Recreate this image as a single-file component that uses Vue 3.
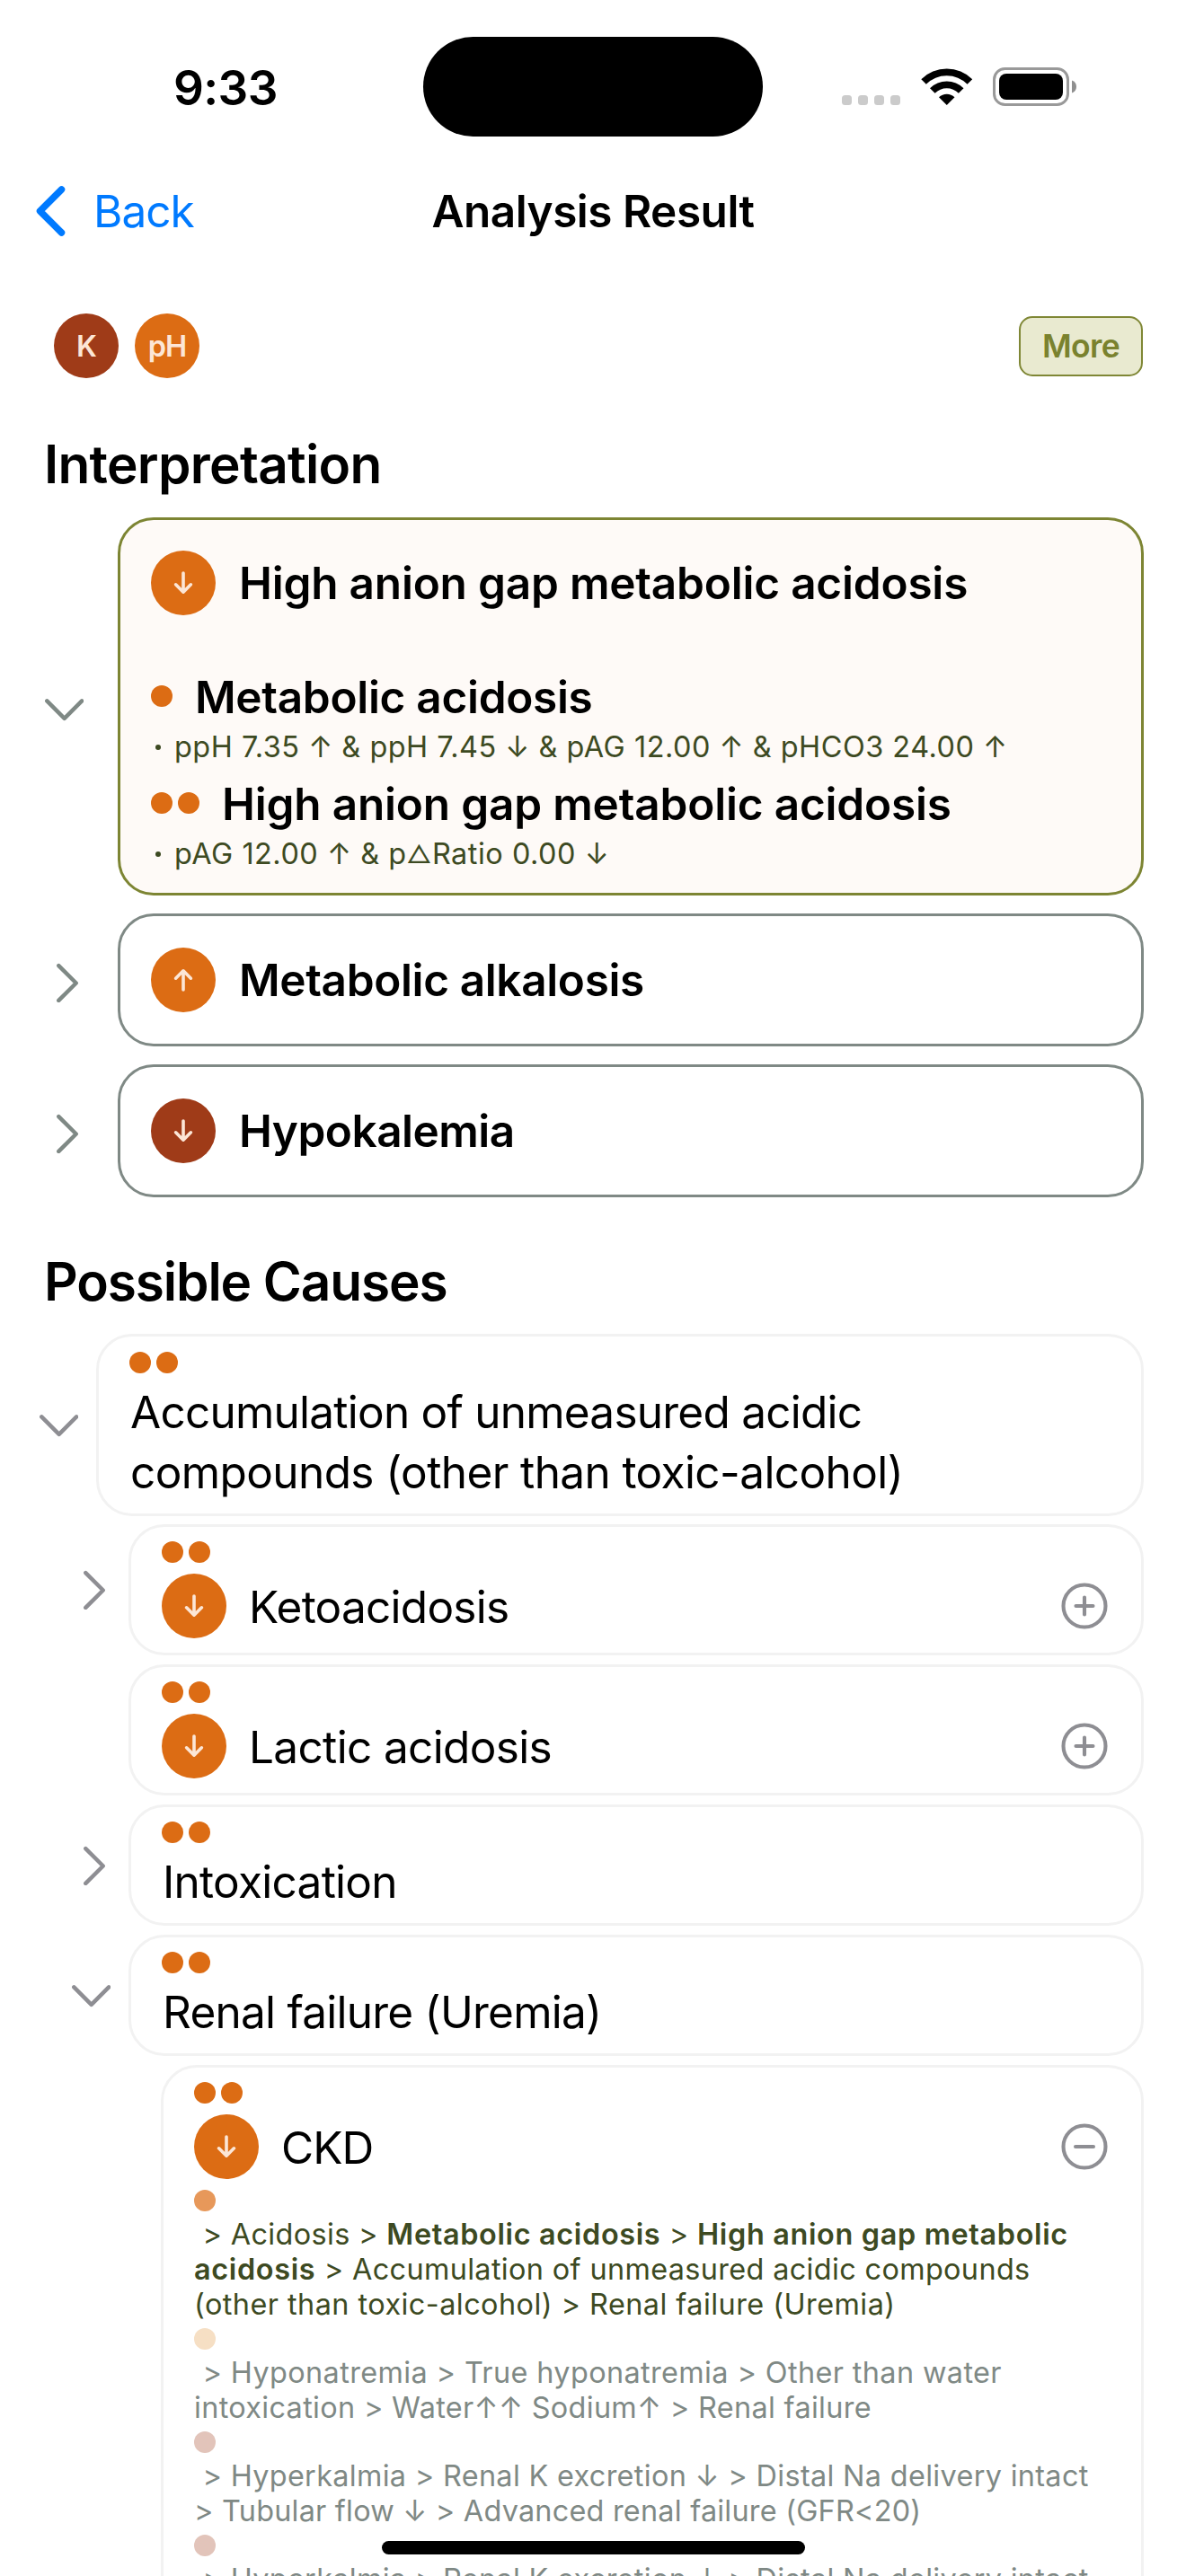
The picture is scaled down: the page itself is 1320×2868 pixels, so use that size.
<script setup>
const interpretations = [
  {
    open: true,
    tone: 'orange',
    dir: 'down',
    title: 'High anion gap metabolic acidosis',
    track: -0.2,
    details: [
      { dots: 1, title: 'Metabolic acidosis', track: -0.3, rule: ['ppH 7.35 ↑ & ppH 7.45 ↓ & pAG 12.00 ↑ & pHCO3 24.00 ↑'] },
      { dots: 2, title: 'High anion gap metabolic acidosis', track: -0.18, rule: ['pAG 12.00 ↑ & p', '△', 'Ratio 0.00 ↓'] },
    ],
  },
  { open: false, tone: 'orange', dir: 'up', title: 'Metabolic alkalosis', track: -0.36 },
  { open: false, tone: 'rust', dir: 'down', title: 'Hypokalemia', track: -0.5 },
]

const causes = [
  {
    level: 1,
    chevron: 'down',
    lines: [
      { t: 'Accumulation of unmeasured acidic', track: -0.76 },
      { t: 'compounds (other than toxic-alcohol)', track: -0.6 },
    ],
  },
  { level: 2, chevron: 'right', badge: true, action: 'plus', lines: [{ t: 'Ketoacidosis', track: -0.75 }] },
  { level: 2, badge: true, action: 'plus', lines: [{ t: 'Lactic acidosis', track: -0.65 }] },
  { level: 2, chevron: 'right', lines: [{ t: 'Intoxication', track: -0.72 }] },
  { level: 2, chevron: 'down', lines: [{ t: 'Renal failure (Uremia)', track: -0.75 }] },
  {
    level: 3,
    badge: true,
    action: 'minus',
    lines: [{ t: 'CKD', track: -1 }],
    paths: [
      {
        dot: '#e7985a',
        active: true,
        lines: [
          { track: 0.36, parts: [{ t: '\u00a0> Acidosis > ' }, { t: 'Metabolic acidosis', b: true }, { t: ' > ' }, { t: 'High anion gap metabolic', b: true }] },
          { track: 0.36, parts: [{ t: 'acidosis', b: true }, { t: ' > Accumulation of unmeasured acidic compounds' }] },
          { track: 0.46, parts: [{ t: '(other than toxic-alcohol) > Renal failure (Uremia)' }] },
        ],
      },
      {
        dot: '#f6dfc4',
        lines: [
          { track: 0.39, parts: [{ t: '\u00a0> Hyponatremia > True hyponatremia > Other than water' }] },
          { track: 0.33, parts: [{ t: 'intoxication > Water↑↑ Sodium↑ > Renal failure' }] },
        ],
      },
      {
        dot: '#e2c4ba',
        lines: [
          { track: 0.33, parts: [{ t: '\u00a0> Hyperkalmia > Renal K excretion ↓ > Distal Na delivery intact' }] },
          { track: 0.23, parts: [{ t: '> Tubular flow ↓ > Advanced renal failure (GFR<20)' }] },
        ],
      },
      {
        dot: '#e2c4ba',
        lines: [{ track: 0.33, parts: [{ t: '\u00a0> Hyperkalmia > Renal K excretion ↓ > Distal Na delivery intact' }] }],
      },
    ],
  },
]

const chevronDown = 'M3.3 12.4 L22.7 31.8 L42.1 12.4'
const chevronRight = 'M12.3 3.1 L31.7 22.5 L12.3 41.9'
const arrow = 'M12 3 V24 M3.6 15.8 L12 24.2 L20.4 15.8'
const tracking = (v) => ({ letterSpacing: v + 'px' })
</script>

<template>
  <div class="screen">
    <header class="status">
      <span class="time">9:33</span>
      <div class="island"></div>
      <div class="indicators">
        <svg class="cell" width="65" height="11" viewBox="0 0 65 11">
          <rect v-for="i in 4" :key="i" :x="(i - 1) * 18" y="0" width="11" height="11" rx="3.5" fill="#cbcbcb" />
        </svg>
        <svg class="wifi" width="58" height="42" viewBox="0 0 58 42">
          <path d="M0.3 13.2 A40.5 40.5 0 0 1 57.2 13.2 L51.6 18.7 A32.5 32.5 0 0 0 5.8 18.7 Z" />
          <path d="M10 23.2 A26.5 26.5 0 0 1 47.5 23.2 L41.9 28.7 A18.5 18.5 0 0 0 15.6 28.7 Z" />
          <path d="M20 33.2 A12.5 12.5 0 0 1 37.5 33.2 L28.75 42 Z" />
        </svg>
        <svg class="battery" width="94" height="43" viewBox="0 0 94 43">
          <rect x="1.5" y="1.5" width="82" height="40" rx="12" fill="none" stroke="#999" stroke-width="3" />
          <rect x="7" y="7" width="71" height="29" rx="8" fill="#000" />
          <path d="M88 14.5 C91 15.5 93 18 93 21.5 S91 27.5 88 28.5 Z" fill="#8f8f8f" />
        </svg>
      </div>
    </header>

    <nav class="nav">
      <div class="back">
        <svg width="36" height="60" viewBox="0 0 36 60">
          <path d="M31.5 6 L7.5 30 L31.5 54" fill="none" stroke="#007aff" stroke-width="7.5" stroke-linecap="round" stroke-linejoin="round" />
        </svg>
        <span>Back</span>
      </div>
      <h1>Analysis Result</h1>
    </nav>

    <div class="toolbar">
      <div class="chips">
        <span class="disc rust">K</span>
        <span class="disc orange">pH</span>
      </div>
      <button class="more">More</button>
    </div>

    <h2 class="first">Interpretation</h2>
    <section class="group">
      <div v-for="item in interpretations" :key="item.title" class="row">
        <div class="gutter top" :class="item.open ? 'down' : 'right'">
          <svg width="44" height="44" viewBox="0 0 44 44">
            <path :d="item.open ? chevronDown : chevronRight" />
          </svg>
        </div>
        <article class="card finding" :class="{ open: item.open }">
          <div class="head">
            <span class="disc" :class="item.tone">
              <svg width="24" height="28" viewBox="0 0 24 28" :class="item.dir"><path :d="arrow" /></svg>
            </span>
            <strong :style="tracking(item.track)">{{ item.title }}</strong>
          </div>
          <div v-for="d in item.details" :key="d.title" class="detail">
            <div class="detail-head">
              <i v-for="n in d.dots" :key="n" class="dot"></i>
              <strong :style="tracking(d.track)">{{ d.title }}</strong>
            </div>
            <p><span class="bullet"></span><span v-for="(r, n) in d.rule" :key="n" :class="{ delta: n === 1 }">{{ r }}</span></p>
          </div>
        </article>
      </div>
    </section>

    <h2 class="second">Possible Causes</h2>
    <section class="tree">
      <div v-for="(c, i) in causes" :key="i" class="row" :class="'level' + c.level">
        <div class="gutter" :class="c.chevron">
          <svg v-if="c.chevron" width="44" height="44" viewBox="0 0 44 44">
            <path :d="c.chevron === 'down' ? chevronDown : chevronRight" />
          </svg>
        </div>
        <article class="card cause" :class="{ plain: !c.badge }">
          <div class="dots"><i class="dot"></i><i class="dot"></i></div>
          <div class="head">
            <span v-if="c.badge" class="disc orange">
              <svg width="24" height="28" viewBox="0 0 24 28"><path :d="arrow" /></svg>
            </span>
            <div class="name"><div v-for="l in c.lines" :key="l.t" :style="tracking(l.track)">{{ l.t }}</div></div>
            <svg v-if="c.action" class="action" width="52" height="52" viewBox="0 0 52 52">
              <circle cx="26" cy="26" r="23.5" />
              <path :d="c.action === 'plus' ? 'M16.5 26 H35.5 M26 16.5 V35.5' : 'M16 26 H36'" />
            </svg>
          </div>
          <div v-for="(p, k) in c.paths" :key="k" class="path" :class="{ active: p.active }">
            <i class="dot" :style="{ background: p.dot }"></i>
            <p>
              <span v-for="(l, m) in p.lines" :key="m" class="line" :style="tracking(l.track)"><template v-for="(s, n) in l.parts" :key="n"><b v-if="s.b">{{ s.t }}</b><template v-else>{{ s.t }}</template></template></span>
            </p>
          </div>
        </article>
      </div>
    </section>

    <div class="home"></div>
  </div>
</template>

<style>
body { margin: 0; background: #fff; }
</style>

<style scoped>
.screen {
  position: relative;
  width: 1320px;
  height: 2868px;
  overflow: hidden;
  background: #fff;
  color: #000;
  font-family: Inter, "Liberation Sans", sans-serif;
  font-size: 49.5px;
}
h1, h2, p { margin: 0; }
strong, h1, h2 { font-weight: 600; }

.status { display: grid; grid-template-columns: 471px 378px 471px; height: 165px; }
.time { padding-left: 193px; padding-top: 65px; font-size: 53px; line-height: 66px; font-weight: 600; letter-spacing: -0.6px; }
.island { margin-top: 41px; height: 111px; border-radius: 56px; background: #000; }
.indicators { display: flex; align-items: flex-start; padding: 75px 0 0 88px; }
.cell { margin-top: 31px; }
.wifi { margin-left: 23px; }
.battery { margin-left: 22px; }

.nav { display: grid; grid-template-columns: 1fr auto 1fr; align-items: center; height: 140px; }
.back { display: flex; align-items: center; padding-left: 37px; color: #007aff; }
.back span { margin-left: 31px; letter-spacing: -1px; }
h1 { font-size: 49.5px; letter-spacing: -0.5px; }

.toolbar { display: flex; align-items: center; justify-content: space-between; height: 160px; padding: 0 48px 0 60px; }
.chips { display: flex; gap: 18px; }
.disc { display: flex; flex: none; align-items: center; justify-content: center; width: 72px; height: 72px; border-radius: 50%; color: #fce6d6; font-size: 32.5px; font-weight: 600; letter-spacing: -1px; }
.orange { background: #dc6c14; }
.rust { background: #9f3b18; }
.disc svg path { fill: none; stroke: #fce6d6; stroke-width: 3.6; stroke-linecap: round; stroke-linejoin: round; }
.disc svg.up { transform: rotate(180deg); }
.more { box-sizing: border-box; width: 138px; height: 67px; padding: 0; border: 2px solid #7f8735; border-radius: 15px; background: #e9ead0; color: #7a822e; font: 600 35.5px Inter, sans-serif; letter-spacing: -0.7px; }

h2 { padding-left: 49px; font-size: 58.5px; letter-spacing: -0.7px; }
.first { line-height: 104px; margin-bottom: 7px; }
.second { padding-top: 35px; line-height: 117px; letter-spacing: -1.1px; }

.row { display: flex; padding-right: 47px; }
.group { display: flex; flex-direction: column; gap: 20px; }
.gutter { display: flex; flex: none; align-items: center; box-sizing: border-box; width: 131px; }
.gutter path { fill: none; stroke: #8e8e93; stroke-width: 4.5; stroke-linecap: round; stroke-linejoin: round; }
.gutter.top { padding-top: 6px; }
.gutter.top path { stroke: #7f8985; }
.gutter.top.down { padding-left: 49px; }
.gutter.top.right { padding-left: 53px; }

.card { flex: 1; box-sizing: border-box; border: 3px solid #f2f2f2; border-radius: 40px; }
.finding { height: 148px; padding: 35px 34px; border-color: #7f8985; }
.finding.open { height: 421px; padding-top: 34px; border-color: #7d8533; background: #fefaf7; }
.head { display: flex; align-items: center; height: 72px; }
.finding .head strong { margin-left: 26px; line-height: 66px; }
.finding.open .head { margin-bottom: 56px; }
.detail { height: 119px; }
.detail-head { display: flex; align-items: center; height: 68px; gap: 6px; }
.detail-head strong { margin-left: 19px; padding-top: 1px; }
.dot { display: block; flex: none; width: 24px; height: 24px; border-radius: 50%; background: #dc6c14; }
.detail p { display: flex; align-items: center; margin-top: 2px; color: #3d4a22; font-size: 32.4px; line-height: 42px; letter-spacing: 0.53px; white-space: pre; }
.delta { font-size: 27.5px; }
.bullet { width: 6px; height: 6px; margin: 0 15px 0 5px; border-radius: 50%; background: #3d4a22; }

.tree { display: flex; flex-direction: column; gap: 10px; }
.cause { padding: 16px 34px; }
.dots { display: flex; gap: 6px; margin-bottom: 12px; }
.level1 { margin-bottom: -1px; }
.level1 .gutter { width: 107px; }
.level1 .gutter.down { padding-left: 43px; }
.level1 .card { height: 203px; padding-top: 17px; }
.level2 .gutter { width: 143px; }
.level2 .gutter.down { padding-left: 79px; }
.level2 .gutter.right { padding-left: 83px; }
.level2 .card { height: 146px; }
.level2 .card.plain { height: 135px; }
.level3 .gutter { width: 179px; }
.level3 .card { height: 700px; }
.plain .head { display: block; height: auto; margin: -2px 0 0 1px; }
.name { line-height: 67px; white-space: pre; }
.disc + .name { margin-left: 25px; padding-top: 2px; }
.action { margin-left: auto; margin-right: 3.5px; }
.action circle, .action path { fill: none; stroke: #8e8e93; stroke-width: 4.1; stroke-linecap: round; }
.path { padding-top: 12px; color: #7f8985; font-size: 32.4px; line-height: 39px; }
.path + .path { padding-top: 7px; }
.path.active { color: #3d4a22; }
.path p { margin-top: 6px; }
.line { display: block; white-space: pre; }
.line b { font-weight: 600; letter-spacing: 0.66px; }

.home { position: absolute; left: 425px; top: 2829px; width: 471px; height: 15px; border-radius: 8px; background: #000; }
</style>
